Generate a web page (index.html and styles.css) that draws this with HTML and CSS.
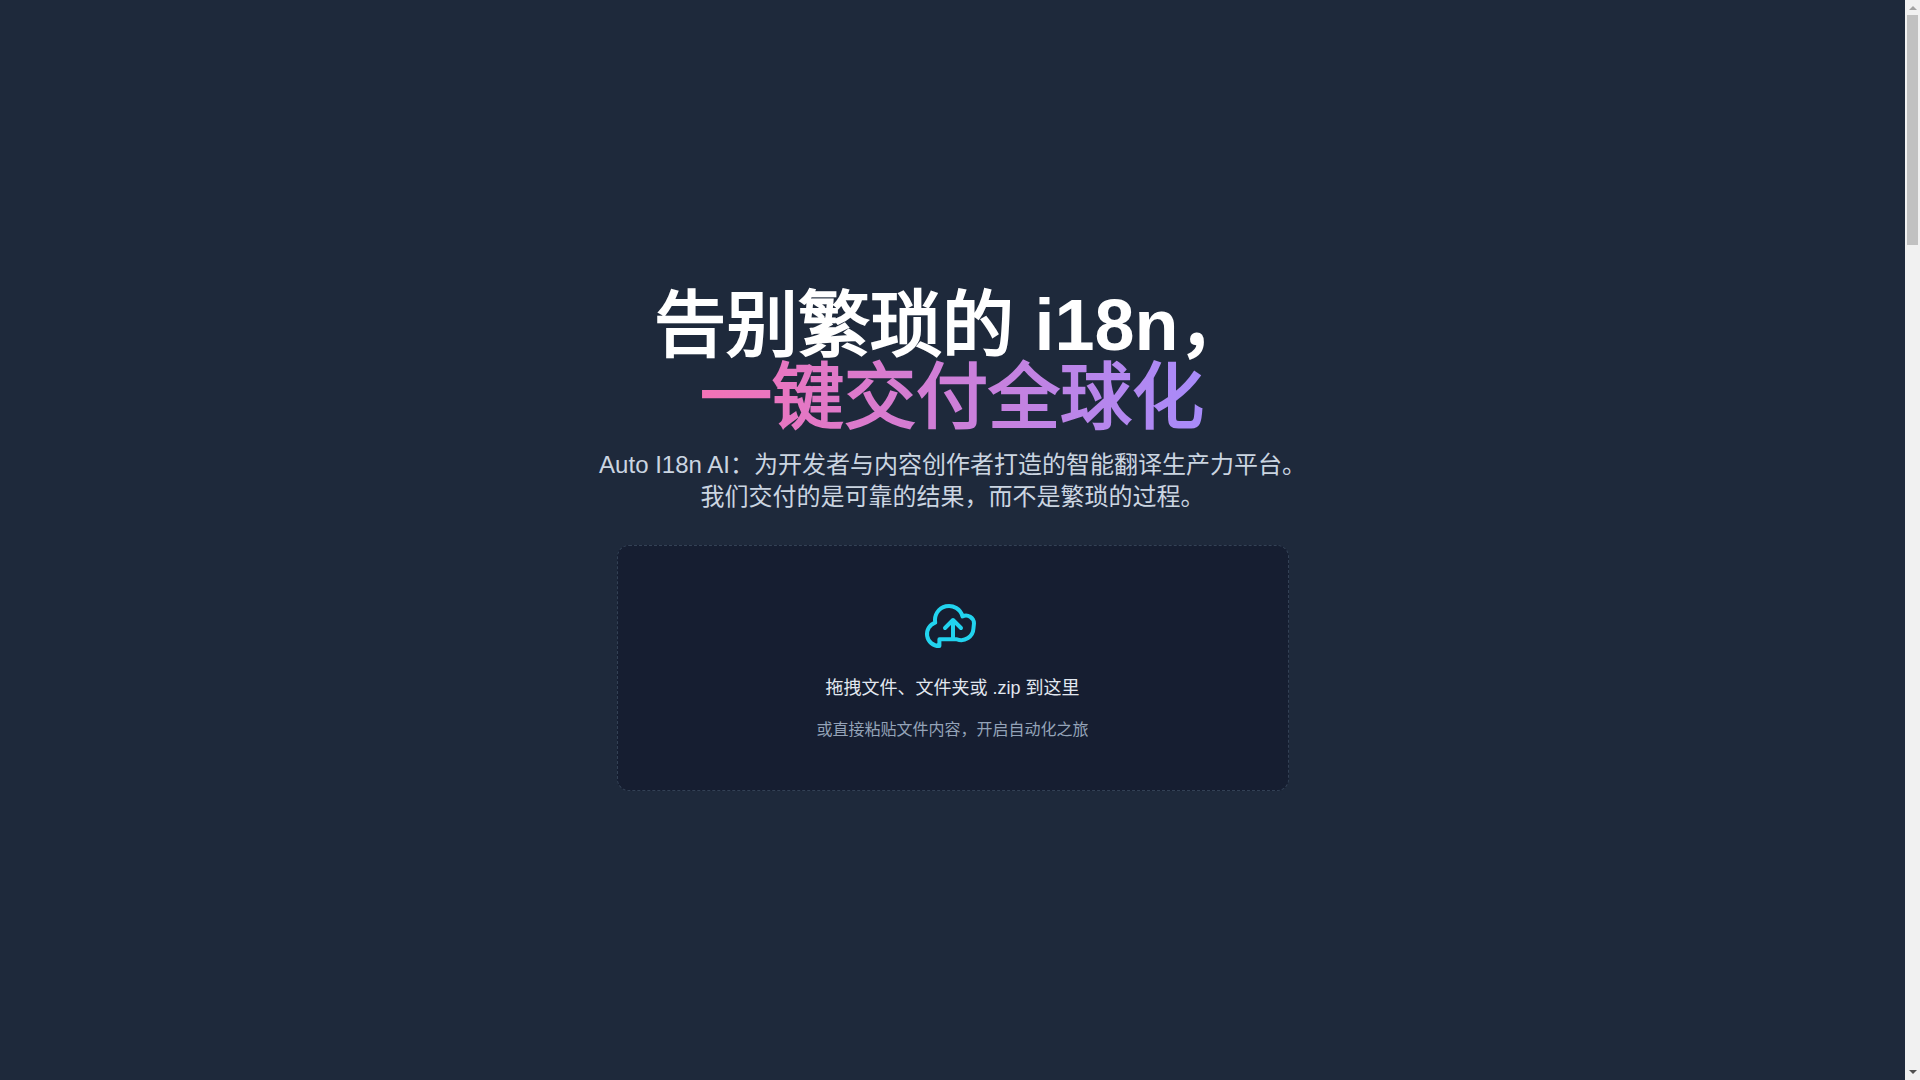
FILE: index.html
```html
<!DOCTYPE html>
<html lang="zh-CN">
<head>
<meta charset="utf-8">
<title>Auto I18n AI</title>
<link rel="stylesheet" href="styles.css">
</head>
<body>
<div class="viewport">
  <main class="hero">
    <h1 class="title">告别繁琐的 i18n，<br><span class="accent">一键交付全球化</span></h1>
    <p class="lead">Auto I18n AI：为开发者与内容创作者打造的智能翻译生产力平台。<br>我们交付的是可靠的结果，而不是繁琐的过程。</p>
    <section class="dropzone">
      <svg class="icon" viewBox="0 0 24 24" aria-hidden="true"><path d="M12 16.5V9.75m0 0l3 3m-3-3l-3 3M6.75 19.5a4.5 4.5 0 01-1.41-8.775 5.25 5.25 0 0110.233-2.33 3 3 0 014.3 2.6l-.2 1.9A4.6 4.6 0 0113.5 17H6.9v2.5z"/></svg>
      <p class="prompt">拖拽文件、文件夹或 .zip 到这里</p>
      <p class="hint">或直接粘贴文件内容，开启自动化之旅</p>
    </section>
  </main>
  <div class="scrollbar" aria-hidden="true">
    <span class="arrow up"></span>
    <span class="thumb"></span>
    <span class="arrow down"></span>
  </div>
</div>
</body>
</html>
```
FILE: styles.css
```css
* { box-sizing: border-box; margin: 0; }
body { background: #1e293b; font-family: "Liberation Sans", "Noto Sans CJK SC", sans-serif; }
.viewport { display: flex; min-height: 100vh; }
.hero { flex: 1; display: flex; flex-direction: column; align-items: center; justify-content: center; text-align: center; }
.title { font-family: "Liberation Sans", sans-serif; font-size: 72px; line-height: 72px; font-weight: 800; color: #fff; }
.accent { background: linear-gradient(to right, #f472b6, #a78bfa); -webkit-background-clip: text; background-clip: text; color: transparent; }
.lead { margin-top: 16px; font-size: 24px; line-height: 32px; color: #cbd5e1; }
.dropzone { display: flex; flex-direction: column; align-items: center; gap: 16px; width: 100%; max-width: 672px; margin-top: 32px; padding: 48px; border: 1px dashed #334155; border-radius: 12px; background: #161e31; }
.icon { width: 64px; height: 64px; fill: none; stroke: #22d3ee; stroke-width: 1.5; stroke-linecap: round; stroke-linejoin: round; }
.prompt { font-size: 18px; line-height: 28px; color: #e2e8f0; }
.hint { font-size: 16px; line-height: 24px; color: #94a3b8; }
.scrollbar { display: flex; flex-direction: column; align-items: center; width: 15px; padding: 6px 0; background: #f1f1f1; }
.arrow { border: 4px solid transparent; }
.up { border-top: 0; border-bottom-color: #a3a3a3; }
.thumb { width: 11px; height: 230px; margin: 5px 0 auto; background: #c1c1c1; }
.down { border-bottom: 0; border-top-color: #505050; }
```
